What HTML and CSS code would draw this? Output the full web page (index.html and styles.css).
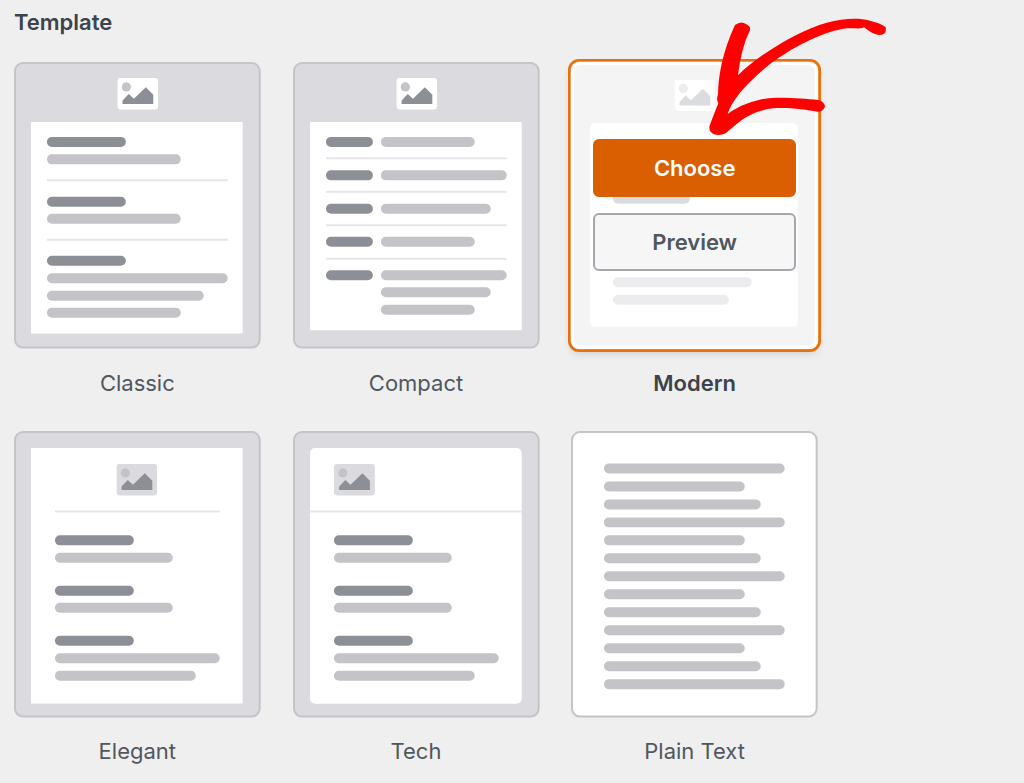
FILE: index.html
```html
<!DOCTYPE html>
<html lang="en">
<head>
<meta charset="utf-8">
<meta name="viewport" content="width=device-width, initial-scale=1">
<title>Template</title>
<link rel="stylesheet" href="styles.css">
</head>
<body>
<svg class="defs" aria-hidden="true">
  <symbol id="picture" viewBox="0 0 41 32">
    <rect class="frame" width="41" height="31.5" rx="3.5"/>
    <circle class="sun" cx="9" cy="9" r="4.6"/>
    <path class="hills" d="M5.2 26v-3.4l6.2-6.6 5.2 4.8L28.5 9.3 36 16.8V26z"/>
  </symbol>
</svg>
<main class="page">
  <fieldset class="templates">
    <legend class="title">Template</legend>
    <div class="grid">
      <div class="template">
        <div class="thumb">
          <svg class="art" viewBox="0 0 247 287" aria-hidden="true">
            <rect class="card" x="1" y="1" width="245" height="285" rx="8"/>
            <use href="#picture" x="103.5" y="16" width="41" height="32"/>
            <path class="paper" d="M17 60h212v212H17z"/>
            <path class="rule" d="M33 118.5h181M33 178h181"/>
            <path class="bar dark" d="M38 80h69M38 140h69M38 199h69"/>
            <path class="bar" d="M38 97.5h124M38 157h124M38 216.5h171M38 234h147M38 251h124"/>
          </svg>
        </div>
        <input class="choice" type="radio" name="template" id="classic">
        <label class="name" for="classic">Classic</label>
      </div>
      <div class="template">
        <div class="thumb">
          <svg class="art" viewBox="0 0 247 287" aria-hidden="true">
            <rect class="card" x="1" y="1" width="245" height="285" rx="8"/>
            <use href="#picture" x="103.5" y="16" width="41" height="32"/>
            <path class="paper" d="M17 60h212v208.5H17z"/>
            <path class="rule" d="M33 96.5h181M33 130h181M33 163.5h181M33 197h181"/>
            <path class="bar dark" d="M38 80h37M38 113.5h37M38 147h37M38 180h37M38 213.5h37"/>
            <path class="bar" d="M93 80h84M93 113.5h116M93 147h100M93 180h84M93 213.5h116M93 230.5h100M93 248h84"/>
          </svg>
        </div>
        <input class="choice" type="radio" name="template" id="compact">
        <label class="name" for="compact">Compact</label>
      </div>
      <div class="template selected">
        <div class="thumb">
          <svg class="art" viewBox="0 0 247 287" aria-hidden="true">
            <rect class="card" x="1" y="1" width="245" height="285" rx="8"/>
            <use href="#picture" x="103.5" y="17.5" width="41" height="32"/>
            <rect class="paper" x="19" y="61" width="208" height="204" rx="5"/>
            <path class="bar dark" d="M47 137h67"/>
            <path class="bar" d="M47 203h151M47 220.5h129M47 238h106"/>
          </svg>
          <div class="actions">
            <button class="button primary" type="button">Choose</button>
            <button class="button" type="button">Preview</button>
          </div>
          <svg class="arrow" viewBox="441 51 546 360" aria-hidden="true">
            <path d="M525 75Q543 61 558 72 573 80 570 90 543 145 534 226C600 160 720 90 800 68 850 55 895 52 930 62Q965 70 977 82 981 103 960 105C940 104 925 92 912 82 900 89 880 82 850 86 780 98 690 145 620 200 560 250 515 300 503 342 540 315 580 303 615 296 660 290 730 296 775 300Q793 305 795 320 788 336 772 335C740 330 690 322 640 325 590 330 555 350 530 372L497 400Q480 408 462 403 447 397 448 380 455 360 475 310 468 297 474 285C475 220 490 150 525 75z"/>
          </svg>
        </div>
        <input class="choice" type="radio" name="template" id="modern" checked>
        <label class="name" for="modern">Modern</label>
      </div>
      <div class="template">
        <div class="thumb">
          <svg class="art" viewBox="0 0 247 287" aria-hidden="true">
            <rect class="card" x="1" y="1" width="245" height="285" rx="8"/>
            <path class="paper" d="M17 17h212v256H17z"/>
            <use class="tinted" href="#picture" x="102.5" y="33" width="41" height="32"/>
            <path class="rule" d="M41 80.5h165"/>
            <path class="bar dark" d="M46 109.5h69M46 160h69M46 210h69"/>
            <path class="bar" d="M46 127h108M46 177h108M46 227.5h155M46 245h131"/>
          </svg>
        </div>
        <input class="choice" type="radio" name="template" id="elegant">
        <label class="name" for="elegant">Elegant</label>
      </div>
      <div class="template">
        <div class="thumb">
          <svg class="art" viewBox="0 0 247 287" aria-hidden="true">
            <rect class="card" x="1" y="1" width="245" height="285" rx="8"/>
            <rect class="paper" x="17" y="17" width="212" height="256" rx="5"/>
            <use class="tinted" href="#picture" x="41" y="33" width="41" height="32"/>
            <path class="rule" d="M17 80.5h212"/>
            <path class="bar dark" d="M46 109.5h69M46 160h69M46 210h69"/>
            <path class="bar" d="M46 127h108M46 177h108M46 227.5h155M46 245h131"/>
          </svg>
        </div>
        <input class="choice" type="radio" name="template" id="tech">
        <label class="name" for="tech">Tech</label>
      </div>
      <div class="template">
        <div class="thumb">
          <svg class="art" viewBox="0 0 247 287" aria-hidden="true">
            <rect class="card plain" x="1" y="1" width="245" height="285" rx="8"/>
            <path class="bar" d="M38 37.5h171m-171 18h131m-131 18h147m-147 18h171m-171 18h131m-131 18h147m-147 18h171m-171 18h131m-131 18h147m-147 18h171m-171 18h131m-131 18h147m-147 18h171"/>
          </svg>
        </div>
        <input class="choice" type="radio" name="template" id="plain">
        <label class="name" for="plain">Plain Text</label>
      </div>
    </div>
  </fieldset>
</main>
</body>
</html>
```
FILE: styles.css
```css
* {
  box-sizing: border-box;
}

body {
  margin: 0;
  background: #efeff0;
  color: #50575e;
  font-family: Inter, "Liberation Sans", sans-serif;
  font-size: 22px;
  line-height: 24px;
}

.defs {
  display: block;
  width: 0;
  height: 0;
}

.page {
  max-width: 832px;
  padding: 10px 14px 18px;
}

.templates {
  min-width: 0;
  margin: 0;
  padding: 0;
  border: 0;
}

.title {
  padding: 0;
  margin-bottom: 28px;
  color: #3c434a;
  font-weight: 600;
}

.grid {
  display: grid;
  grid-template-columns: repeat(3, 1fr);
  gap: 36px 32px;
}

.template {
  display: flex;
  flex-direction: column;
  gap: 22px;
  text-align: center;
}

.thumb {
  position: relative;
  border-radius: 8px;
}

.art {
  display: block;
  width: 100%;
  overflow: visible;
}

.card {
  fill: #dbdbdf;
  stroke: #c4c4c9;
  stroke-width: 2;
}

.plain {
  fill: #fff;
}

.paper {
  fill: #fff;
}

.tinted {
  --frame: #dbdbdf;
}

.frame {
  fill: var(--frame, #fff);
}

.sun {
  fill: #c3c3c8;
}

.hills {
  fill: #8c8f96;
}

.rule {
  stroke: #e5e5e7;
  stroke-width: 2;
}

.bar {
  fill: none;
  stroke: #c3c3c8;
  stroke-width: 10;
  stroke-linecap: round;
}

.dark {
  stroke: #8c8f96;
}

.choice {
  position: absolute;
  opacity: 0;
  pointer-events: none;
}

.selected .thumb {
  background: #fff;
  box-shadow: 0 0 0 3px #ea700b, 0 4px 8px rgb(0 0 0 / 15%);
}

.selected .art {
  opacity: 0.3;
}

.selected .card {
  stroke: #fff;
  stroke-width: 4;
}

.selected .name {
  color: #3c434a;
  font-weight: 600;
}

.actions {
  position: absolute;
  inset: 0;
  display: flex;
  flex-direction: column;
  justify-content: center;
  gap: 16px;
  padding: 0 22px;
}

.button {
  height: 58px;
  padding: 0 12px;
  border: 2px solid #a5a7ad;
  border-radius: 6px;
  background: #f6f6f7;
  color: #50575e;
  font: inherit;
  font-weight: 600;
}

.primary {
  border-color: #d95f00;
  background: #d95f00;
  color: #fff;
}

.arrow {
  position: absolute;
  top: -45px;
  left: 136px;
  width: 182px;
  height: 120px;
  fill: #f00;
  pointer-events: none;
}
```
